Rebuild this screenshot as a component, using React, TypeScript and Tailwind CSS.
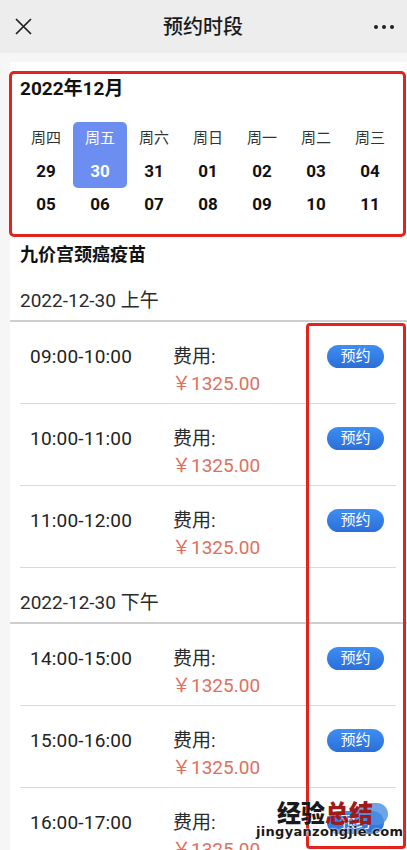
import React from "react";

const FONT = { fontFamily: 'Roboto, "Noto Sans CJK SC", sans-serif' };

const weekdays = ["周四", "周五", "周六", "周日", "周一", "周二", "周三"];
const row1 = ["29", "30", "31", "01", "02", "03", "04"];
const row2 = ["05", "06", "07", "08", "09", "10", "11"];

function Slot({ time }: { time: string }) {
  return (
    <div className="ml-[10px] mr-[11px] h-[82px] border-b border-[#dadada] flex">
      <div className="w-[153px] pl-[10px] pt-[22px] text-[19px] leading-[26px] text-[#222] tracking-[0.2px]">{time}</div>
      <div className="flex-1 pt-[22px]">
        <div className="text-[19px] leading-[26px] text-[#2a2a2a]">费用:</div>
        <div className="text-[19px] leading-[24px] text-[#e0705c] -ml-[1px]">
          <span style={{ fontFamily: '"Noto Sans CJK SC", sans-serif' }}>￥</span>1325.00
        </div>
      </div>
      <div className="pt-[23px] pr-[12px]">
        <div className="w-[57px] h-[23px] rounded-full bg-gradient-to-b from-[#3f8ef2] to-[#2a6fd8] text-white text-[15px] leading-[23px] text-center">
          预约
        </div>
      </div>
    </div>
  );
}

function SectionHead({ label }: { label: string }) {
  return (
    <div className="h-[56px] flex items-end pb-[6px] pl-[10px] border-b-2 border-[#cfcfcf] text-[19px] leading-[26px] text-[#2a2a2a]">
      {label}
    </div>
  );
}

export default function App() {
  return (
    <div className="relative w-[407px] h-[850px] overflow-hidden bg-[#f6f6f6]" style={FONT}>
      {/* header */}
      <div className="h-[53px] bg-[#ededed] flex items-center justify-between px-[12px]">
        <svg width="21" height="21" viewBox="0 0 21 21" className="ml-[1px]">
          <path d="M3 3 L18 18 M18 3 L3 18" stroke="#1f1f1f" strokeWidth="1.7" fill="none" />
        </svg>
        <div className="text-[20px] font-medium text-[#1a1a1a] -ml-[2px]">预约时段</div>
        <div className="flex gap-[4px] items-center mr-[1px]">
          <span className="w-[4px] h-[4px] rounded-full bg-[#1f1f1f]" />
          <span className="w-[4px] h-[4px] rounded-full bg-[#1f1f1f]" />
          <span className="w-[4px] h-[4px] rounded-full bg-[#1f1f1f]" />
        </div>
      </div>

      {/* content */}
      <div className="ml-[10px] mt-[9px] bg-white h-[900px]">
        {/* calendar */}
        <div className="pt-[14px] px-[9px] pb-[20px]">
          <div className="text-[19px] font-bold leading-[26px] text-[#111] pl-[1px]">2022年12月</div>
          <div className="mt-[20px] grid grid-cols-[repeat(7,54px)] grid-rows-[33px_33px_33px]">
            {weekdays.map((w, i) => (
              <div
                key={w}
                className={
                  i === 1
                    ? "flex items-center justify-center text-[15px] text-white bg-[#6b8ef0] rounded-t-[5px]"
                    : "flex items-center justify-center text-[15px] text-[#333]"
                }
              >
                {w}
              </div>
            ))}
            {row1.map((d, i) => (
              <div
                key={d}
                className={
                  i === 1
                    ? "flex items-center justify-center text-[17px] font-bold text-white bg-[#6b8ef0] rounded-b-[5px]"
                    : "flex items-center justify-center text-[17px] font-bold text-[#111]"
                }
              >
                {d}
              </div>
            ))}
            {row2.map((d) => (
              <div key={d} className="flex items-center justify-center text-[17px] font-bold text-[#111]">
                {d}
              </div>
            ))}
          </div>
        </div>

        <div className="pl-[10px] pt-[1px] text-[18px] font-bold leading-[26px] text-[#111]">九价宫颈癌疫苗</div>

        <div className="-mt-[2px]">
          <SectionHead label="2022-12-30 上午" />
          <Slot time="09:00-10:00" />
          <Slot time="10:00-11:00" />
          <Slot time="11:00-12:00" />
          <SectionHead label="2022-12-30 下午" />
          <Slot time="14:00-15:00" />
          <Slot time="15:00-16:00" />
          <Slot time="16:00-17:00" />
        </div>
      </div>

      {/* red highlight boxes */}
      <div className="absolute left-[9px] top-[71px] w-[397px] h-[166px] border-[3px] border-[#e5231d] rounded-[5px] pointer-events-none" />
      <div className="absolute left-[306px] top-[323px] w-[100px] h-[526px] border-[3px] border-[#e5231d] rounded-[4px] pointer-events-none" />

      {/* watermark */}
      <div className="absolute left-[256px] top-[799px] w-[140px] pointer-events-none">
        <div className="absolute left-[100px] top-[4px] w-[32px] h-[22px] rounded-full bg-[#4a8fe0] opacity-80" />
        <div
          className="relative pl-[21px] text-[24px] font-black leading-[26px]"
          style={{ fontFamily: '"Noto Sans CJK SC", sans-serif' }}
        >
          <span className="text-[#1a1a1a]">经验</span>
          <span className="text-[#9e1b1b]">总结</span>
        </div>
        <div
          className="relative text-[13px] font-bold leading-[14px] text-[#1a1a1a] tracking-[0.3px]"
          style={{ fontFamily: '"DejaVu Sans", sans-serif', textShadow: "0 0 2px #fff, 0 0 2px #fff" }}
        >
          jingyanzongjie.com
        </div>
      </div>
    </div>
  );
}
